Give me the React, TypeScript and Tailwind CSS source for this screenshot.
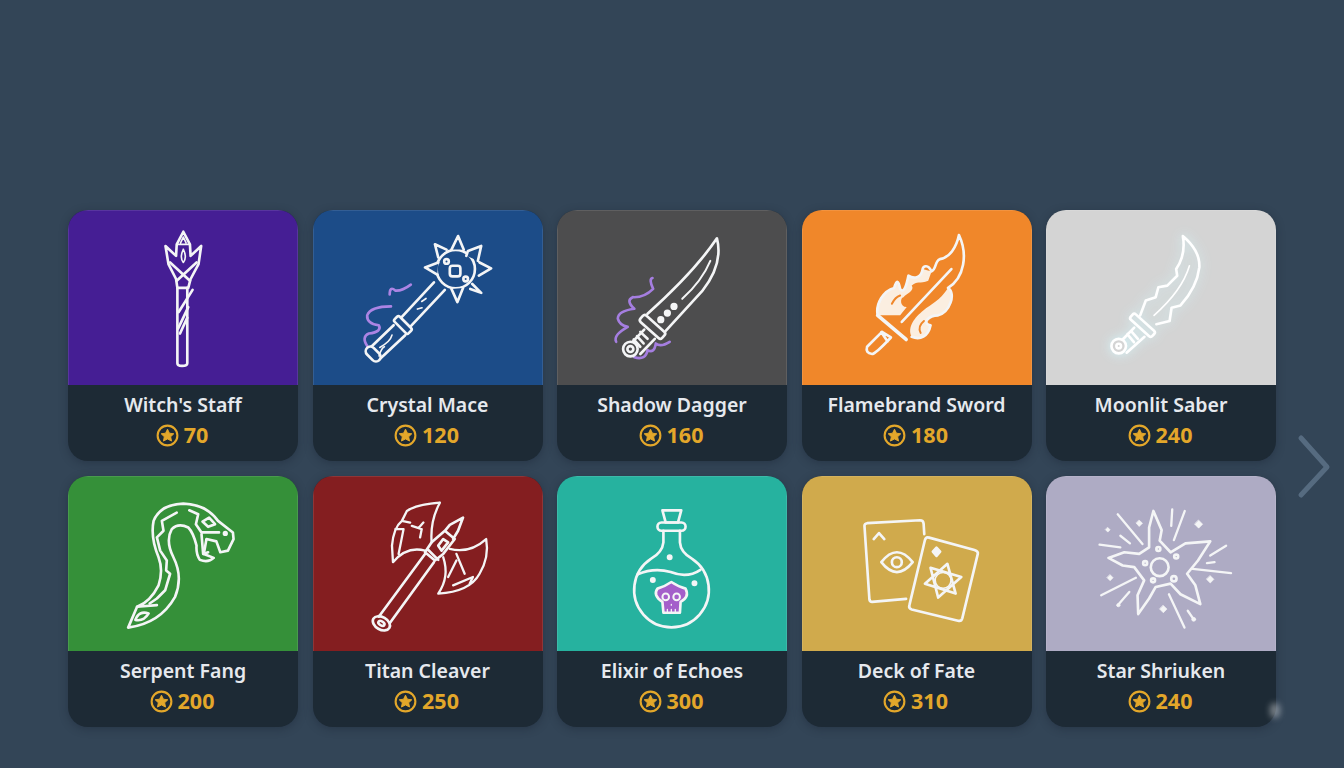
import React from 'react';

const Stroke = ({ box, children, className = '' }: { box: string; children: React.ReactNode; className?: string }) => (
    <svg
        viewBox={box}
        className={`w-full h-full ${className}`}
        fill="none"
        stroke="#f4f5f6"
        strokeWidth="8"
        strokeLinecap="round"
        strokeLinejoin="round"
    >
        {children}
    </svg>
);

const Staff = () => (
    <Stroke box="24 30 690 525">
        <path d="M316 135 L348 165 L350 130 L370 92 L390 130 L392 165 L424 135 L416 190 L392 235 L385 262 L352 262 L348 235 L325 190 Z" />
        <path d="M350 130 H390 M362 125 L370 108 L378 125 M370 145 Q358 170 370 185 Q382 170 370 145" strokeWidth="5" />
        <path d="M330 185 L390 240 M410 185 L350 240" />
        <path d="M352 262 L352 490 Q352 498 366 498 Q382 498 382 490 L382 262" />
        <path d="M356 335 L398 268 M354 385 L385 320 M360 400 L382 352" />
    </Stroke>
);

const Mace = () => (
    <Stroke box="9 30 690 525">
        <path d="M238 282 Q238 255 255 270 Q275 272 302 252 M242 318 Q180 318 170 345 Q168 370 205 375 Q216 395 175 400 Q152 410 170 438" stroke="#ac84e4" />
        <circle cx="438" cy="205" r="58" />
        <path d="M425 146 L445 105 L462 146 M470 165 L475 150 L515 135 L505 180 M510 185 L545 203 L508 225 M488 250 L515 277 L482 265 M425 265 L443 305 L460 262 M385 170 L375 130 L410 146 M385 185 L345 200 L382 222" fill="#1c4c88" />
        <rect x="420" y="195" width="32" height="32" rx="8" />
        <circle cx="410" cy="182" r="7" />
        <circle cx="468" cy="235" r="7" />
        <path d="M372 245 L270 355 M405 268 L295 385" />
        <rect x="-30" y="-11" width="60" height="22" rx="6" transform="translate(278 374) rotate(45)" fill="#1c4c88" />
        <path d="M250 375 L172 450 M285 405 L205 480" />
        <rect x="-26" y="-14" width="52" height="28" rx="14" transform="translate(188 462) rotate(45)" fill="#1c4c88" />
        <path d="M335 303 L348 294 M322 326 L336 322 M208 442 Q240 425 245 405 M206 468 Q212 445 222 440" strokeWidth="5" />
    </Stroke>
);

const Dagger = () => (
    <Stroke box="9 30 690 525">
        <path d="M295 232 Q283 235 297 265 Q270 292 235 290 Q213 300 240 325 Q190 332 190 355 Q195 375 220 380 Q175 405 185 425 M240 472 Q275 482 280 450 Q300 462 305 430 Q320 442 347 425" stroke="#a57ee0" />
        <path d="M280 340 Q420 215 490 112 Q510 190 445 272 L335 392" />
        <path d="M470 180 Q445 240 385 295" strokeWidth="6" />
        <rect x="-44" y="-13" width="88" height="26" rx="8" transform="translate(295 380) rotate(42)" fill="#4d4d4e" />
        <path d="M270 388 L232 428 M302 416 L258 462 M258 395 L280 416 M248 408 L268 430 M238 418 L258 440" />
        <circle cx="228" cy="447" r="22" fill="#4d4d4e" />
        <circle cx="228" cy="447" r="9" />
        <circle cx="360" cy="318" r="7" fill="#f4f5f6" />
        <circle cx="340" cy="338" r="7" fill="#f4f5f6" />
        <circle cx="320" cy="358" r="7" fill="#f4f5f6" />
    </Stroke>
);

const Flame = () => (
    <Stroke box="6 30 690 525">
        <path d="M232 345 C225 310 250 270 282 262 C290 235 295 240 300 265 C312 282 320 250 325 225 C345 238 365 228 368 205 L395 212 L385 240 C360 250 350 240 335 255 C345 270 320 280 310 290 C300 290 298 320 320 320 L300 345 L262 345 Z" fill="#fbeee0" stroke="none" />
        <path d="M335 410 C320 380 345 350 370 330 C395 310 420 300 445 262 C470 280 450 335 415 345 C385 345 365 370 392 375 C385 410 360 420 335 410 Z" fill="#fbeee0" stroke="none" />
        <path d="M362 398 Q352 378 372 362 M275 310 Q285 290 300 285" stroke="#f0872a" strokeWidth="6" />
        <path d="M478 102 C505 160 495 230 445 262 C470 280 450 335 415 345 C385 345 365 370 392 375 C385 410 360 420 335 410 M478 102 C470 140 450 170 420 175 C405 180 410 205 395 212 C385 190 370 195 368 205 C365 228 345 238 325 225 C320 250 312 282 300 265 C295 240 290 235 282 262 C250 270 225 310 232 345" />
        <path d="M232 345 L318 418" strokeWidth="11" />
        <path d="M455 205 L305 365" />
        <path d="M245 395 L200 440 Q194 460 215 462 Q225 462 272 412 M245 395 L272 412 M243 396 L262 424" />
    </Stroke>
);

const Saber = () => (
    <Stroke box="21 30 690 525" className="drop-shadow-[0_0_6px_#d4f6fb]">
        <g stroke="#ffffff">
            <path d="M432 105 Q485 150 482 200 Q475 260 425 315 L398 322 L392 362 L352 372 M432 105 Q442 160 412 205 L415 225 L385 255 L358 260 L350 290 L320 300 L303 345" />
            <path d="M452 195 Q430 270 345 345" strokeWidth="5" />
            <rect x="-44" y="-11" width="88" height="22" rx="7" transform="translate(310 375) rotate(42)" />
            <path d="M285 382 L250 418 M316 410 L262 458 M275 392 L296 416 M264 402 L284 426" />
            <circle cx="238" cy="438" r="22" fill="#d4d4d4" />
            <circle cx="238" cy="438" r="7" />
        </g>
    </Stroke>
);

const Snake = () => (
    <Stroke box="24 18 690 525">
        <path d="M203 473 L230 410 Q270 395 295 345 Q310 300 295 260 Q270 200 280 150 Q300 100 370 98 Q440 100 475 150 L520 185 L522 205 L505 240 L482 245 L470 212 L440 205 L432 250 L462 262 Q445 278 420 268 Q408 250 410 225 Q400 185 385 170 Q355 155 335 175 Q315 210 340 260 Q370 320 345 380 Q300 460 203 473 Z" />
        <path d="M350 125 L305 150 L310 180 L290 200 L300 240 L320 270 L318 300 L330 310 L315 360 L290 385 L268 400" />
        <path d="M388 118 L415 130 L408 160 L425 185 L478 185 M425 190 L430 250 L445 245" />
        <path d="M428 152 L448 140 L466 160 L445 168 Z" />
        <path d="M230 410 L290 405 M225 450 Q235 420 265 430 Q250 455 225 450" />
        <circle cx="497" cy="188" r="4" fill="#f4f5f6" />
    </Stroke>
);

const Axe = () => (
    <Stroke box="9 18 690 525">
        <path d="M345 250 L205 440 M372 275 L238 460" />
        <ellipse cx="213" cy="460" rx="28" ry="19" transform="rotate(30 213 460)" />
        <ellipse cx="213" cy="460" rx="10" ry="6" transform="rotate(30 213 460)" />
        <path d="M365 215 L405 180 L435 205 L400 250 L375 270 L345 245 Z M405 180 L420 162 L460 140 L445 180 L430 205 M352 235 L385 268 M385 225 L400 205 L415 215 L395 240 Z" />
        <path d="M390 95 Q320 100 290 120 L275 150 Q250 170 245 225 L248 275 Q290 225 345 240 M365 215 Q360 150 390 95 M275 150 L300 155 M255 175 L280 175 L265 250 M305 165 L335 175 L330 200 M340 155 L325 172" strokeWidth="7" />
        <path d="M530 205 Q480 250 420 235 M400 260 Q420 320 385 370 Q480 365 510 310 Q540 260 530 205 M440 250 L465 310 M440 270 L415 320 M430 345 L490 320 L480 340" strokeWidth="7" />
    </Stroke>
);

const Potion = () => (
    <Stroke box="9 18 690 525">
        <path d="M325 118 H382 L372 155 H335 Z" />
        <rect x="310" y="155" width="85" height="25" rx="12" />
        <path d="M328 180 V215 Q325 245 290 265 A113 113 0 1 0 415 265 Q380 245 378 215 V180" />
        <path d="M250 312 Q300 290 350 305 Q400 325 440 298" />
        <circle cx="347" cy="260" r="5" fill="#f4f5f6" />
        <circle cx="296" cy="329" r="5" fill="#f4f5f6" />
        <circle cx="422" cy="339" r="5" fill="#f4f5f6" />
        <path d="M352 335 Q375 350 395 355 Q408 380 380 395 L378 428 H328 L325 395 Q295 375 310 355 Q330 350 352 335 Z" fill="#a45fca" />
        <circle cx="335" cy="380" r="10" strokeWidth="6" />
        <circle cx="368" cy="380" r="10" strokeWidth="6" />
        <path d="M352 403 V405 M340 418 V424 M352 418 V424 M364 418 V424" strokeWidth="4" />
    </Stroke>
);

const Cards = () => (
    <Stroke box="6 18 690 525">
        <path d="M318 386 L215 395 Q208 395 207 388 L192 165 Q192 158 200 157 L360 148 Q370 148 371 158 L373 190" />
        <path d="M220 205 L236 187 L252 205" />
        <path d="M243 275 Q290 215 338 275 Q290 335 243 275 Z" />
        <circle cx="290" cy="275" r="15" />
        <path d="M385 200 L525 238 Q537 242 535 250 L488 445 Q485 455 475 452 L335 418 Q325 415 328 405 L375 208 Q378 198 385 200 Z" />
        <path d="M410 231 L421 243 L410 256 L399 243 Z" fill="#f4f5f6" />
        <path d="M443 280 L468 370 L375 340 Z M392 292 L485 320 L415 382 Z" />
        <circle cx="430" cy="330" r="24" strokeWidth="5" />
    </Stroke>
);

const Shuriken = () => (
    <Stroke box="21 18 690 525">
        <path d="M343 120 L368 178 L362 210 L395 245 L440 218 L515 212 L478 270 L445 310 L470 345 L485 402 L425 372 L395 340 L350 350 L330 385 L297 432 L295 375 L315 330 L285 290 L250 285 L207 262 L255 245 L300 250 L330 230 L330 170 Z" />
        <circle cx="362" cy="290" r="27" />
        <circle cx="358" cy="235" r="6" />
        <circle cx="318" cy="278" r="6" />
        <circle cx="412" cy="258" r="6" />
        <circle cx="405" cy="325" r="8" />
        <circle cx="342" cy="330" r="6" />
        <path d="M235 130 L310 220 M243 195 L272 218 M180 222 L243 230 M400 115 L397 165 M438 120 L405 208 M563 225 L515 255 M505 278 L528 275 M462 295 L578 308 M290 322 L185 375 M270 365 L235 405 M390 372 L437 473 M447 422 L465 448" strokeWidth="7" />
        <g fill="#f4f5f6" strokeWidth="2">
            <path d="M300 148 L310 157 L300 167 L291 157 Z M480 148 L492 160 L480 172 L468 160 Z M205 170 L212 177 L205 184 L198 177 Z M212 313 L221 322 L212 331 L203 322 Z M515 316 L526 327 L515 338 L504 327 Z M373 406 L384 417 L373 428 L362 417 Z" />
            <circle cx="237" cy="405" r="5" />
            <circle cx="465" cy="448" r="6" />
        </g>
    </Stroke>
);

const Coin = () => (
    <svg viewBox="0 0 24 24" className="w-[23px] h-[23px] shrink-0">
        <circle cx="12" cy="12" r="10.3" fill="none" stroke="#e3a72a" strokeWidth="2.2" />
        <path d="M12 5.4 L14 9.6 L18.6 10.2 L15.3 13.3 L16.2 17.8 L12 15.6 L7.8 17.8 L8.7 13.3 L5.4 10.2 L10 9.6 Z" fill="#e3a72a" stroke="#e3a72a" strokeWidth="1" strokeLinejoin="round" />
    </svg>
);

const items = [
    { name: "Witch's Staff", price: 70, bg: 'bg-[#451e94]', icon: Staff },
    { name: 'Crystal Mace', price: 120, bg: 'bg-[#1c4c88]', icon: Mace },
    { name: 'Shadow Dagger', price: 160, bg: 'bg-[#4d4d4e]', icon: Dagger },
    { name: 'Flamebrand Sword', price: 180, bg: 'bg-[#f0872a]', icon: Flame },
    { name: 'Moonlit Saber', price: 240, bg: 'bg-[#d4d4d4]', icon: Saber },
    { name: 'Serpent Fang', price: 200, bg: 'bg-[#359039]', icon: Snake },
    { name: 'Titan Cleaver', price: 250, bg: 'bg-[#841e20]', icon: Axe },
    { name: 'Elixir of Echoes', price: 300, bg: 'bg-[#26b29f]', icon: Potion },
    { name: 'Deck of Fate', price: 310, bg: 'bg-[#d0aa4c]', icon: Cards },
    { name: 'Star Shriuken', price: 240, bg: 'bg-[#aeabc4]', icon: Shuriken },
];

export default function App() {
    return (
        <div className="relative h-[768px] overflow-hidden bg-[#334557] pt-[210px] pl-[68px] flex items-start font-['Noto_Sans',sans-serif]">
            <div className="w-[1208px] grid grid-cols-5 gap-x-[14.5px] gap-y-[15px]">
                {items.map((item) => (
                    <div key={item.name} className="h-[251px] rounded-[20px] overflow-hidden bg-[#1d2a35] shadow-[0_2px_8px_rgba(20,30,42,0.35)]">
                        <div className={`h-[175px] border-t border-x border-white/10 ${item.bg}`}>
                            <item.icon />
                        </div>
                        <div className="h-[76px] flex flex-col items-center pt-[5px]">
                            <div className="text-[19.5px] leading-[30px] font-semibold text-[#e6e9ee]">{item.name}</div>
                            <div className="flex items-center gap-[5px] text-[21.5px] leading-[30px] font-bold text-[#e3a72a] -translate-x-px">
                                <Coin />
                                {item.price}
                            </div>
                        </div>
                    </div>
                ))}
            </div>
            <svg viewBox="0 0 34 66" className="w-[34px] h-[66px] ml-[21px] mt-[224px] shrink-0" fill="none" stroke="#566b80" strokeWidth="5" strokeLinecap="round" strokeLinejoin="round">
                <path d="M4 4 L30 33 L4 61" />
            </svg>
            {/* stray highlight at the corner of the last card */}
            <div className="absolute left-[1270px] top-[703px] w-[10px] h-[15px] rounded-full bg-white/40 blur-[3px]" />
        </div>
    );
}
